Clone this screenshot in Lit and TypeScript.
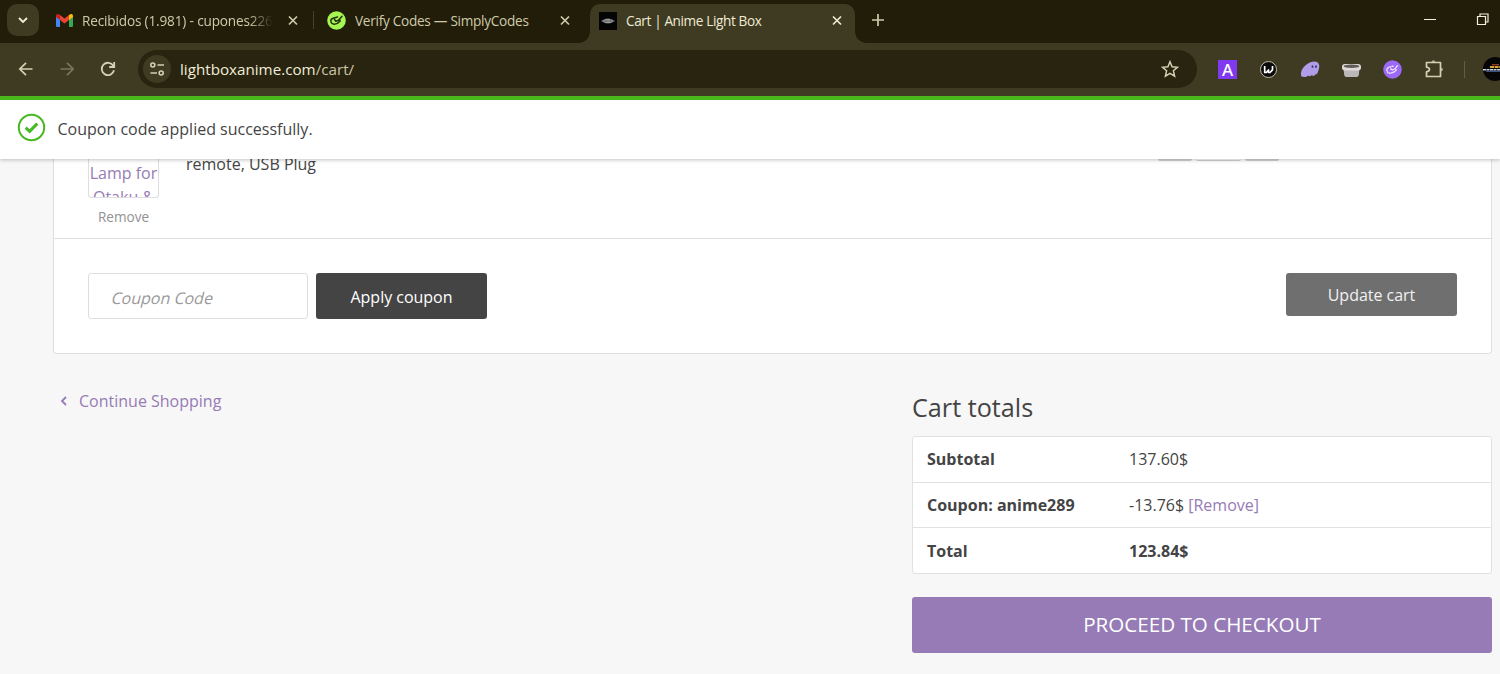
import { LitElement, html, css } from "lit";
import { customElement } from "lit/decorators.js";

const closeIcon = html`<svg class="close" width="12" height="12" viewBox="0 0 12 12" fill="none" stroke="currentColor" stroke-width="1.7"><path d="M2 1.500l8 8M10 1.500l-8 8" /></svg>`;

@customElement("browser-tabs")
class BrowserTabs extends LitElement {
  static styles = css`
    :host { display: flex; height: 43px; background: #211d09; color: #cfcaaa; font: 13.6px/20px "Open Sans", "Noto Sans", sans-serif; }
    svg { display: block; flex: none; }
    .search { width: 32px; height: 32px; margin: 4px 0 0 7px; border-radius: 10px; background: #3f3b22; display: flex; align-items: center; justify-content: center; color: #f0ecd5; }
    .tab { display: flex; align-items: center; height: 41px; box-sizing: border-box; white-space: nowrap; }
    .gmail { margin-left: 17px; width: 243px; }
    .codes { margin-left: 13px; width: 244px; }
    .label { flex: 1; min-width: 0; overflow: hidden; letter-spacing: -0.27px; }
    .gmail .label { margin: 0 14px 0 9px; letter-spacing: -0.16px; -webkit-mask-image: linear-gradient(90deg, #000 87%, transparent); mask-image: linear-gradient(90deg, #000 87%, transparent); }
    .codes .label { margin: 0 20px 0 9px; }
    .rule { width: 1px; height: 18px; background: #474228; margin: 11px 0 0 14px; }
    .active { position: relative; margin: 4px 0 0 19px; width: 265px; height: 39px; padding: 0 12px 6px 9px; background: #3f3b22; border-radius: 10px 10px 0 0; color: #eeead2; }
    .active .label { margin-left: 9px; letter-spacing: -0.38px; }
    .active::before, .active::after { content: ""; position: absolute; bottom: 0; width: 11px; height: 11px; }
    .active::before { left: -11px; background: radial-gradient(circle at 0 0, transparent 10.5px, #3f3b22 11px); }
    .active::after { right: -11px; background: radial-gradient(circle at 100% 0, transparent 10.5px, #3f3b22 11px); }
    .plus { margin: 14px 0 0 17px; }
    .window { margin: 12px 11px 0 auto; display: flex; gap: 40px; color: #f2efdf; }
  `;
  render() {
    return html`
      <div class="search"><svg width="12" height="12" viewBox="0 0 12 12" fill="none" stroke="currentColor" stroke-width="1.8"><path d="M2 4l4 4 4-4" /></svg></div>
      <div class="tab gmail">
        <svg width="17" height="13" viewBox="0 0 17 13"><path d="M0 2v10q0 1 1 1h3V5z" fill="#4285f4" /><path d="M17 2v10q0 1-1 1h-3V5z" fill="#34a853" /><path d="M13 1v5l4-3V2c0-2-2-2.500-3-1.600z" fill="#fbbc04" /><path d="M4 1v5L0 3V2C0 0 2-.5 3 .4z" fill="#c5221f" /><path d="M4 1l4.500 3.500L13 1v5L8.500 9.400 4 6z" fill="#ea4335" /></svg>
        <span class="label">Recibidos (1.981) - cupones226</span>${closeIcon}
      </div>
      <div class="rule"></div>
      <div class="tab codes">
        <svg width="19" height="19" viewBox="0 0 19 19"><circle cx="9.500" cy="9.500" r="9.300" fill="#a5f553" /><path d="M10.500 6L5.500 7.500Q3.300 8.700 4 11q.8 2.300 3.200 2.200 3.800-.4 6-3.200l-.5-1.300M7.500 8.500l1.300 1.700 2.700-1L15 5.200" fill="none" stroke="#26320f" stroke-width="1.500" stroke-linecap="round" stroke-linejoin="round" /></svg>
        <span class="label">Verify Codes — SimplyCodes</span>${closeIcon}
      </div>
      <div class="tab active">
        <svg width="18" height="18" viewBox="0 0 18 18"><path d="M0 0h18v18H0z" fill="#050505" /><ellipse cx="9" cy="9" rx="5.500" ry="2.500" fill="#6c6c70" /><path d="M2.500 9h4M8 9h3M12 9h3.500M6 7.500h5M6 10.500h6" stroke="#a7a7a7" stroke-width=".8" /></svg>
        <span class="label">Cart | Anime Light Box</span>${closeIcon}
      </div>
      <svg class="plus" width="12" height="12" viewBox="0 0 12 12" stroke="currentColor" stroke-width="1.700"><path d="M6 0v12M0 6h12" /></svg>
      <div class="window">
        <svg width="12" height="14" viewBox="0 0 12 14" stroke="currentColor"><path d="M0 7.500h12" /></svg>
        <svg width="13" height="14" viewBox="0 0 13 14" fill="none" stroke="currentColor" stroke-width="1.200"><path d="M1.500 4.500h8v8h-8zM4 4V2h8v8h-2" /></svg>
      </div>`;
  }
}

@customElement("browser-toolbar")
class BrowserToolbar extends LitElement {
  static styles = css`
    :host { display: flex; align-items: center; height: 53px; box-sizing: border-box; background: #3f3b22; color: #d5d0b3; padding: 0 0 1px 18px; overflow: hidden; }
    svg { display: block; flex: none; }
    .forward { margin-left: 25px; color: #79745b; }
    .reload { margin-left: 25px; }
    .address { display: flex; flex: none; align-items: center; box-sizing: border-box; margin-left: 22px; width: 1059px; height: 38px; padding: 0 18px 0 5px; border-radius: 19px; background: #28240f; }
    .info { width: 28px; height: 28px; border-radius: 50%; background: #3f3b22; display: flex; align-items: center; justify-content: center; }
    .url { flex: 1; margin: -1px 0 0 9px; font: 15.2px/22px "Open Sans", "Noto Sans", sans-serif; color: #f0ecd8; }
    .path { color: #cbc6a8; }
    .extensions { display: flex; flex: none; align-items: center; margin-left: 21px; gap: 22px; }
    .purple { width: 19px; height: 19px; background: #8038f0; color: #fff; font: 500 17px/19px "Noto Sans", sans-serif; text-align: center; }
    .rule { flex: none; width: 1px; height: 17px; background: #625d43; margin: 0 18px 0 20px; }
  `;
  render() {
    return html`
      <svg width="16" height="16" viewBox="0 0 16 16" fill="none" stroke="currentColor" stroke-width="1.700"><path d="M14.500 8H2M8 1.800L1.800 8 8 14.200" /></svg>
      <svg class="forward" width="16" height="16" viewBox="0 0 16 16" fill="none" stroke="currentColor" stroke-width="1.700"><path d="M1.500 8H14M8 1.800L14.200 8 8 14.200" /></svg>
      <svg class="reload" width="16" height="16" viewBox="0 0 16 16" fill="none" stroke="currentColor" stroke-width="1.800"><path d="M13.300 4.800A6.200 6.200 0 1 0 14 9.300M14.200 1v5H9.200" /></svg>
      <div class="address">
        <div class="info"><svg width="16" height="16" viewBox="0 0 16 16" fill="none" stroke="currentColor" stroke-width="1.600"><circle cx="3.800" cy="4" r="2" /><path d="M8.500 4H15M1.500 12H8" /><circle cx="12.200" cy="12" r="2" /></svg></div>
        <span class="url">lightboxanime.com<span class="path">/cart/</span></span>
        <svg width="18" height="18" viewBox="0 0 18 18" fill="none" stroke="currentColor" stroke-width="1.500"><path d="M9 1.800l2.100 5 5.300.5-4 3.500 1.200 5.300L9 13.300l-4.600 2.800 1.200-5.300-4-3.500 5.300-.5z" /></svg>
      </div>
      <div class="extensions">
        <div class="purple">A</div>
        <svg width="19" height="19" viewBox="0 0 19 19"><circle cx="9.500" cy="9.500" r="8" fill="#0b0b0b" stroke="#cfcdbf" stroke-width=".9" /><path d="M5.700 6v6.500h1.500l2.300-2.500v2.500H11l2.500-2.700V6" fill="none" stroke="#fff" stroke-width="1.700" stroke-linejoin="round" /></svg>
        <svg width="20" height="18" viewBox="0 0 20 18"><path d="M1 16Q.3 9 6.500 4.500C10 2 14 .5 17 2c3 1.600 2.600 6 1.200 9-.6 2.300-1.700 4.300-3 3.300-.8 2-2.400 2.500-3.300.7-1.200 1.300-3 1.700-3.800.6C6.300 17.500 3 17.600 1 16z" fill="#af9de9" /><path d="M12.500 5.500v2.200M16 5.500v2.200" stroke="#3f3467" stroke-width="1.700" /></svg>
        <svg width="19" height="18" viewBox="0 0 19 18"><path d="M1.500 8h16l-.7 7q-.5 2-2 2H4.200q-1.500 0-2-2z" fill="#bbb7b8" /><rect x="0" y="4" width="19" height="6.500" rx="3" fill="#ddd9d9" /><ellipse cx="9.500" cy="6.300" rx="7.800" ry="1.700" fill="#625c59" /></svg>
        <svg width="19" height="19" viewBox="0 0 19 19"><circle cx="9.500" cy="9.500" r="9.300" fill="#9b69f5" /><path d="M10.500 6L5.500 7.500Q3.300 8.700 4 11q.8 2.300 3.200 2.200 3.800-.4 6-3.200l-.5-1.300M7.500 8.500l1.300 1.700 2.700-1L15 5.200" fill="none" stroke="#f2eaff" stroke-width="1.400" stroke-dasharray="2 .4" stroke-linejoin="round" /></svg>
        <svg width="20" height="20" viewBox="0 0 20 20" fill="none" stroke="currentColor" stroke-width="1.700" stroke-linejoin="round"><path d="M2.500 3.500h14v14h-14v-4.700q3-.6 3-2.300t-3-2.300z" /><path d="M7.500 2.700q2-3 4 0zM17.300 8.500q3 2 0 4z" fill="currentColor" stroke="none" /></svg>
      </div>
      <div class="rule"></div>
      <svg width="24" height="24" viewBox="0 0 24 24"><circle cx="12" cy="12" r="12" fill="#060606" /><path d="M9 7.700h7" stroke="#9c3f30" stroke-width="1.300" /><path d="M7 10h11" stroke="#d6a52f" stroke-width="2" stroke-dasharray="4 .6" /><path d="M0 12.800h24" stroke="#c8d0dc" stroke-width="1.400" stroke-dasharray="3 .5" /><path d="M3 14.300h18" stroke="#4965a0" /></svg>`;
  }
}

@customElement("cart-page")
class CartPage extends LitElement {
  static styles = css`
    :host { display: block; height: 578px; overflow: hidden; background: #f7f7f7; color: #444; font: 16px/26px "Open Sans", "Noto Sans", sans-serif; }
    svg { display: block; flex: none; }
    .notice { position: relative; display: flex; align-items: center; box-sizing: border-box; height: 63px; padding: 0 0 2px 17px; border-top: 4px solid #4ab81d; background: #fff; box-shadow: 0 1px 4px rgba(0,0,0,.24); }
    .notice svg { margin: -2px 11.500px 0 0; }
    .card { box-sizing: border-box; width: 1439px; height: 195px; margin-left: 53px; border: 1px solid #dfdfdf; border-top: 0; border-radius: 0 0 4px 4px; background: #fff; }
    .item { display: flex; align-items: flex-start; height: 79px; border-bottom: 1px solid #dfdfdf; overflow: hidden; padding: 0 34px; }
    .thumb { width: 71px; text-align: center; }
    .image { box-sizing: border-box; height: 39px; border: 1px solid #dedee0; border-top: 0; border-radius: 0 0 3px 3px; overflow: hidden; color: #967bb4; line-height: 24px; padding-top: 2px; white-space: nowrap; }
    .image span { display: block; }
    .remove { font-size: 13.600px; line-height: 20px; color: #929292; margin-top: 9px; }
    .desc { margin: -8px 0 0 27px; width: 972px; }
    .quantity { display: flex; gap: 4px; }
    .step { width: 34px; height: 2px; border-radius: 0 0 4px 4px; background: #d2d2d2; }
    .count { width: 45px; height: 2px; box-sizing: border-box; border-bottom: 1px solid #d2d2d2; border-radius: 0 0 3px 3px; }
    .actions { display: flex; align-items: flex-start; padding: 34.400px 34px 0; }
    .field { box-sizing: border-box; width: 220px; height: 46px; border: 1px solid #dedede; border-radius: 3px; padding: 11px 23px; color: #999; margin-right: 8px; }
    .slanted { display: inline-block; transform: skewX(-14deg); }
    .button { width: 171px; height: 46px; line-height: 49px; border-radius: 3px; background: #444; color: #fff; text-align: center; font-weight: 500; letter-spacing: -.02px; }
    .update { margin-left: auto; height: 42.400px; line-height: 44px; background: #6f6f6f; color: #f1f1f1; }
    .lower { display: flex; justify-content: space-between; align-items: flex-start; padding: 34px 8px 0 60px; }
    .continue { display: flex; align-items: center; gap: 11px; color: #967bb4; }
    .totals { width: 580px; margin-top: 1px; }
    .heading { margin: 0 0 10px; font-size: 25.200px; line-height: 37px; font-weight: 400; }
    .table { border: 1px solid #e1e1e1; border-radius: 3px; background: #fff; }
    .row { display: grid; grid-template-columns: 202px 1fr; height: 44.700px; align-items: center; padding: 0 14px; border-bottom: 1px solid #e1e1e1; }
    .row:last-child { border: 0; }
    .strong { font-weight: 700; }
    .link { color: #967bb4; }
    .checkout { height: 56px; margin-top: 23px; border-radius: 3px; background: #967bb6; color: #fff; text-align: center; font-size: 20.600px; line-height: 54px; }
  `;
  render() {
    return html`
      <div class="notice">
        <svg width="29" height="29" viewBox="0 0 29 29" fill="none" stroke="#46b820"><circle cx="14.500" cy="14.500" r="12.700" stroke-width="2" /><path d="M8.700 14.700l3.900 3.700 7.700-7.800" stroke-width="3" /></svg>
        <span>Coupon code applied successfully.</span>
      </div>
      <div class="card">
        <div class="item">
          <div class="thumb"><div class="image"><span>Lamp for</span><span>Otaku &amp;</span></div><div class="remove">Remove</div></div>
          <div class="desc">remote, USB Plug</div>
          <div class="quantity"><div class="step"></div><div class="count"></div><div class="step"></div></div>
        </div>
        <div class="actions">
          <div class="field"><span class="slanted">Coupon Code</span></div>
          <div class="button">Apply coupon</div>
          <div class="button update">Update cart</div>
        </div>
      </div>
      <div class="lower">
        <div class="continue"><svg width="8" height="10" viewBox="0 0 8 10" fill="none" stroke="currentColor" stroke-width="1.800"><path d="M6 1L2 5l4 4" /></svg><span>Continue Shopping</span></div>
        <div class="totals">
          <h2 class="heading">Cart totals</h2>
          <div class="table">
            <div class="row"><span class="strong">Subtotal</span><span>137.60$</span></div>
            <div class="row"><span class="strong">Coupon: anime289</span><span>-13.76$ <span class="link">[Remove]</span></span></div>
            <div class="row"><span class="strong">Total</span><span class="strong">123.84$</span></div>
          </div>
          <div class="checkout">PROCEED TO CHECKOUT</div>
        </div>
      </div>`;
  }
}

@customElement("app-root")
class AppRoot extends LitElement {
  static styles = css`:host { display: block; width: 1500px; height: 674px; overflow: hidden; }`;
  render() {
    return html`<browser-tabs></browser-tabs><browser-toolbar></browser-toolbar><cart-page></cart-page>`;
  }
}
